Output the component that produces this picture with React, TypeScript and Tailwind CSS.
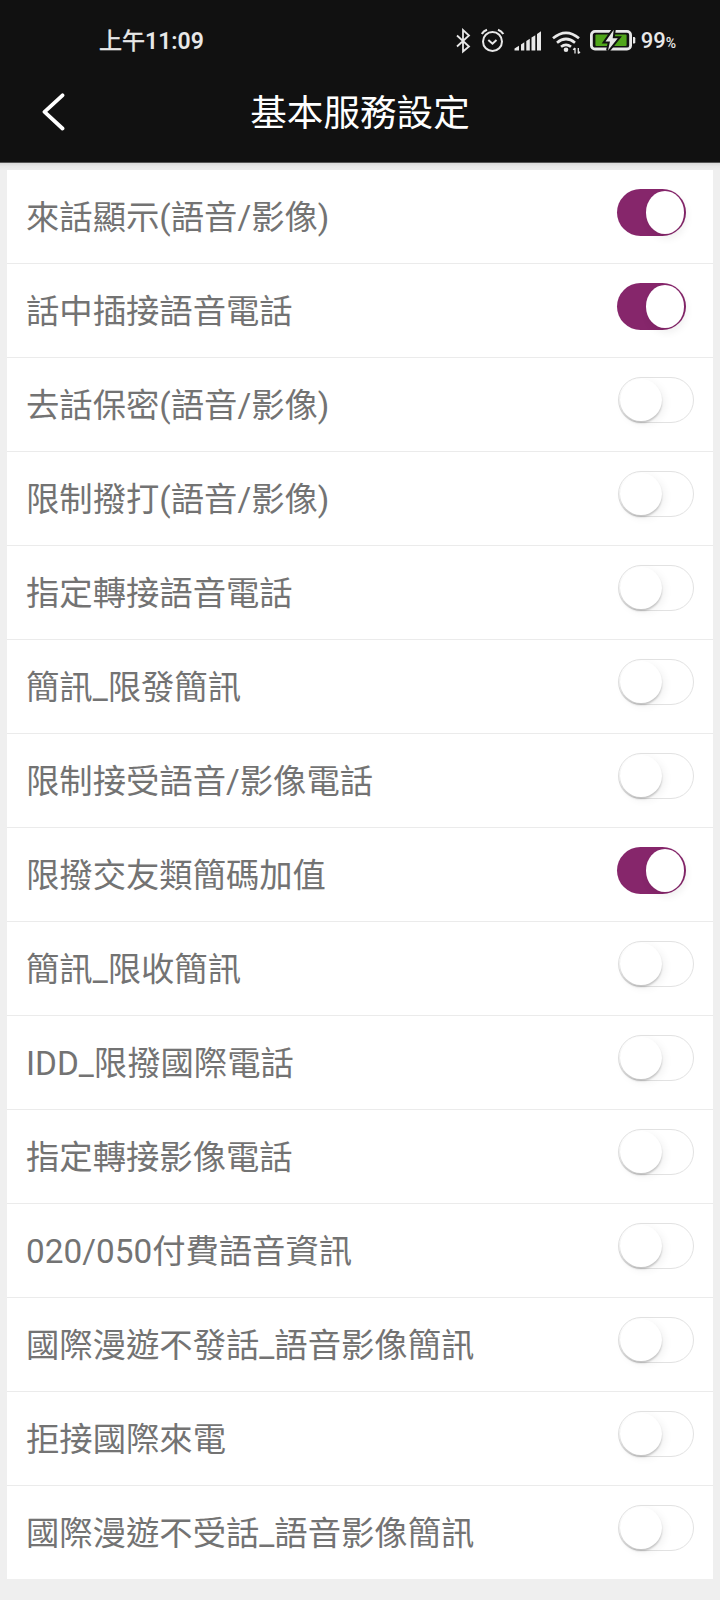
import React, { useState } from 'react';
import clsx from 'clsx';

interface Service {
  id: number;
  label: string;
  enabled: boolean;
}

const initialServices: Service[] = [
  { id: 1, label: '來話顯示(語音/影像)', enabled: true },
  { id: 2, label: '話中插接語音電話', enabled: true },
  { id: 3, label: '去話保密(語音/影像)', enabled: false },
  { id: 4, label: '限制撥打(語音/影像)', enabled: false },
  { id: 5, label: '指定轉接語音電話', enabled: false },
  { id: 6, label: '簡訊_限發簡訊', enabled: false },
  { id: 7, label: '限制接受語音/影像電話', enabled: false },
  { id: 8, label: '限撥交友類簡碼加值', enabled: true },
  { id: 9, label: '簡訊_限收簡訊', enabled: false },
  { id: 10, label: 'IDD_限撥國際電話', enabled: false },
  { id: 11, label: '指定轉接影像電話', enabled: false },
  { id: 12, label: '020/050付費語音資訊', enabled: false },
  { id: 13, label: '國際漫遊不發話_語音影像簡訊', enabled: false },
  { id: 14, label: '拒接國際來電', enabled: false },
  { id: 15, label: '國際漫遊不受話_語音影像簡訊', enabled: false }
];

function BluetoothIcon() {
  return (
    <svg width="16" height="26" viewBox="0 0 16 26" fill="none" stroke="currentColor" strokeWidth="1.8">
      <path d="M1 7.5 13 18.5 7 23.5V2L13 7.5 1 18.5" />
    </svg>
  );
}

function AlarmIcon() {
  return (
    <svg width="24" height="26" viewBox="0 0 24 26" fill="none" stroke="currentColor" strokeWidth="2">
      <circle cx="11.5" cy="13.5" r="9.5" />
      <path d="M7.3 12 11.5 15.7 15.5 12" />
      <path d="M0.8 6Q2.5 3 6 1.7M22.3 6Q20.5 3 17 1.7" strokeWidth="2.2" />
    </svg>
  );
}

function SignalIcon() {
  return (
    <svg width="28" height="20" viewBox="0 0 28 20" fill="currentColor">
      <path d="M0.5 19.5V17.5L5 14.7V19.5ZM7 19.5V13.4L10.3 11.2V19.5ZM12.3 19.5V10L15.8 7.8V19.5ZM17.5 19.5V6.6L21.3 4.3V19.5ZM23 19.5V3L27 0.3V19.5Z" />
    </svg>
  );
}

function WifiIcon() {
  return (
    <svg width="30" height="24" viewBox="0 0 30 24" fill="none" stroke="currentColor" strokeWidth="2.7">
      <path d="M1 7.3Q14 -3.7 27 7.3M5 11.7Q14 4.3 23 11.7M9 15.8Q14 12 19 15.8" />
      <circle cx="14" cy="18.7" r="2.3" fill="currentColor" stroke="none" />
      <path d="M23 22.5V17M21.2 18.8 23 17M26.3 17V22.5M28 20.7 26.3 22.5" strokeWidth="1.3" />
    </svg>
  );
}

function BatteryIcon() {
  return (
    <svg width="46" height="22" viewBox="0 0 46 22">
      <rect x="1.4" y="1.4" width="39.2" height="17.6" rx="3.6" fill="none" stroke="currentColor" strokeWidth="2.8" />
      <rect x="5.4" y="4.6" width="31.2" height="11.4" rx="1" fill="#50a51a" />
      <path d="M43 7h1q1.3 0 1.3 1.3v3.9q0 1.3-1.3 1.3h-1z" fill="currentColor" />
      <path d="M23.7 -0.2 15.5 11.6H20L18 20.6 27.8 8.2H22.7Z" fill="currentColor" stroke="#111" strokeWidth="4" paintOrder="stroke" />
    </svg>
  );
}

function StatusBar() {
  return (
    <div className="flex h-20 items-center justify-between pr-[44px] pl-[99px] text-[#e8e8e8]">
      <span className="mt-0.5 text-[23px] leading-none">
        <span className="[-webkit-text-stroke:0.5px_#e8e8e8]">上午</span>
        <span className="font-semibold">11:09</span>
      </span>
      <div className="mt-px flex items-center">
        <BluetoothIcon />
        <span className="ml-[9px]">
          <AlarmIcon />
        </span>
        <span className="ml-[9px]">
          <SignalIcon />
        </span>
        <span className="mt-1 ml-[10px]">
          <WifiIcon />
        </span>
        <span className="ml-[8px]">
          <BatteryIcon />
        </span>
        <span className="ml-[5px] flex items-baseline font-medium leading-none">
          <span className="text-[22px]">99</span>
          <span className="text-[14px]">%</span>
        </span>
      </div>
    </div>
  );
}

interface ToggleProps {
  checked: boolean;
  label: string;
  onChange: () => void;
}

function Toggle({ checked, label, onChange }: ToggleProps) {
  return (
    <button
      role="switch"
      aria-checked={checked}
      aria-label={label}
      onClick={onChange}
      className={clsx(
        'mt-[18.5px] flex shrink-0 items-center rounded-full',
        checked
          ? 'mr-[27px] h-[47px] w-[69.5px] justify-end bg-[#86266b] pr-[2px]'
          : 'mr-[19px] h-[46.5px] w-[76px] border border-[#e2e2e2] bg-white pl-px'
      )}
    >
      <span
        className={clsx(
          'rounded-[50%] bg-white',
          checked
            ? 'h-[43px] w-[38.5px] shadow-[2px_4px_8px_rgba(0,0,0,0.07)]'
            : 'h-[42.5px] w-[42px] shadow-[0_2px_2px_rgba(0,0,0,0.2),3px_3px_8px_rgba(0,0,0,0.06)]'
        )}
      />
    </button>
  );
}

export default function App() {
  const [services, setServices] = useState(initialServices);

  const toggleService = (id: number) => {
    setServices(services.map((s) => (s.id === id ? { ...s, enabled: !s.enabled } : s)));
  };

  return (
    <div className="h-[1600px] w-[720px] overflow-hidden bg-[#efefef] font-[Roboto,'Noto_Sans_CJK_TC',sans-serif]">
      <header className="h-[163px] border-b border-[#555] bg-[#111]">
        <StatusBar />
        <div className="grid h-[64px] grid-cols-[1fr_auto_1fr] items-center">
          <button aria-label="返回" className="ml-[42px] w-6">
            <svg width="24" height="38" viewBox="0 0 24 38" fill="none" stroke="white" strokeWidth="3.8" strokeLinecap="round" strokeLinejoin="round">
              <path d="M20.5 2.3 2.5 18.8 20.5 35.5" />
            </svg>
          </button>
          <h1 className="pt-1 text-[36.6px] leading-none text-white">基本服務設定</h1>
        </div>
      </header>

      <div className="h-[7px] bg-linear-to-b from-[#dadada] via-[#e8e8e8] to-[#ededed]" />

      <main className="mr-[7px] ml-[7px] bg-white">
        {services.map((service) => (
          <div
            key={service.id}
            className="flex h-[94px] items-start justify-between border-b border-[#ebebeb] last:h-[93px] last:border-b-0"
          >
            <span className="ml-[19px] flex h-[93px] items-center pt-0.5 text-[33.35px] leading-none whitespace-nowrap text-[#737373]">
              {service.label}
            </span>
            <Toggle
              checked={service.enabled}
              label={service.label}
              onChange={() => toggleService(service.id)}
            />
          </div>
        ))}
      </main>
    </div>
  );
}
